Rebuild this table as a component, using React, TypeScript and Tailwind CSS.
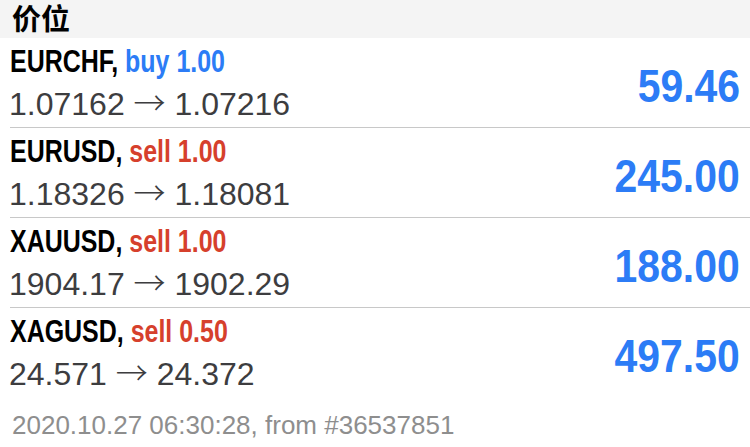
import React from "react";

type Pos = {
  sym: string;
  side: "buy" | "sell";
  lots: string;
  from: string;
  to: string;
  profit: string;
};

const rows: Pos[] = [
  { sym: "EURCHF", side: "buy", lots: "1.00", from: "1.07162", to: "1.07216", profit: "59.46" },
  { sym: "EURUSD", side: "sell", lots: "1.00", from: "1.18326", to: "1.18081", profit: "245.00" },
  { sym: "XAUUSD", side: "sell", lots: "1.00", from: "1904.17", to: "1902.29", profit: "188.00" },
  { sym: "XAGUSD", side: "sell", lots: "0.50", from: "24.571", to: "24.372", profit: "497.50" },
];

export default function App() {
  return (
    <div className="w-[750px] h-[447px] bg-white overflow-hidden font-['Liberation_Sans',Arial,sans-serif]">
      <div className="h-[38px] bg-[#f4f4f4] pl-[12px] text-[29px] leading-[35px] font-bold text-black font-['Noto_Sans_CJK_SC',sans-serif]">
        价位
      </div>
      {rows.map((r, i) => (
        <div
          key={r.sym}
          className={
            "ml-[10px] h-[90px] flex justify-between pr-[10px] " +
            (i < rows.length - 1 ? "border-b border-[#c8c8c8]" : "")
          }
        >
          <div className="flex flex-col pt-[7px] gap-[8px]">
            <div className="text-[32px] leading-none font-bold whitespace-nowrap">
              <span className="inline-block origin-left scale-x-[0.78]">
                <span className="text-black">{r.sym}, </span>
                <span className={r.side === "buy" ? "text-[#2c7cf6]" : "text-[#d6402c]"}>
                  {r.side} {r.lots}
                </span>
              </span>
            </div>
            <div className="text-[32px] leading-none text-[#3d3d3f] whitespace-nowrap -ml-[1px]">
              {r.from}{" "}
              <span className="font-['Noto_Sans_CJK_SC',sans-serif] font-light">→</span>{" "}
              {r.to}
            </div>
          </div>
          <div className="pt-[25px]">
            <span className="inline-block origin-right scale-x-[0.89] text-[46px] leading-none font-bold text-[#2c7cf6]">
              {r.profit}
            </span>
          </div>
        </div>
      ))}
      <div className="pt-[14px] pl-[12px] text-[26px] leading-none text-[#8e8e8e] whitespace-nowrap">
        2020.10.27 06:30:28, from #36537851
      </div>
    </div>
  );
}
